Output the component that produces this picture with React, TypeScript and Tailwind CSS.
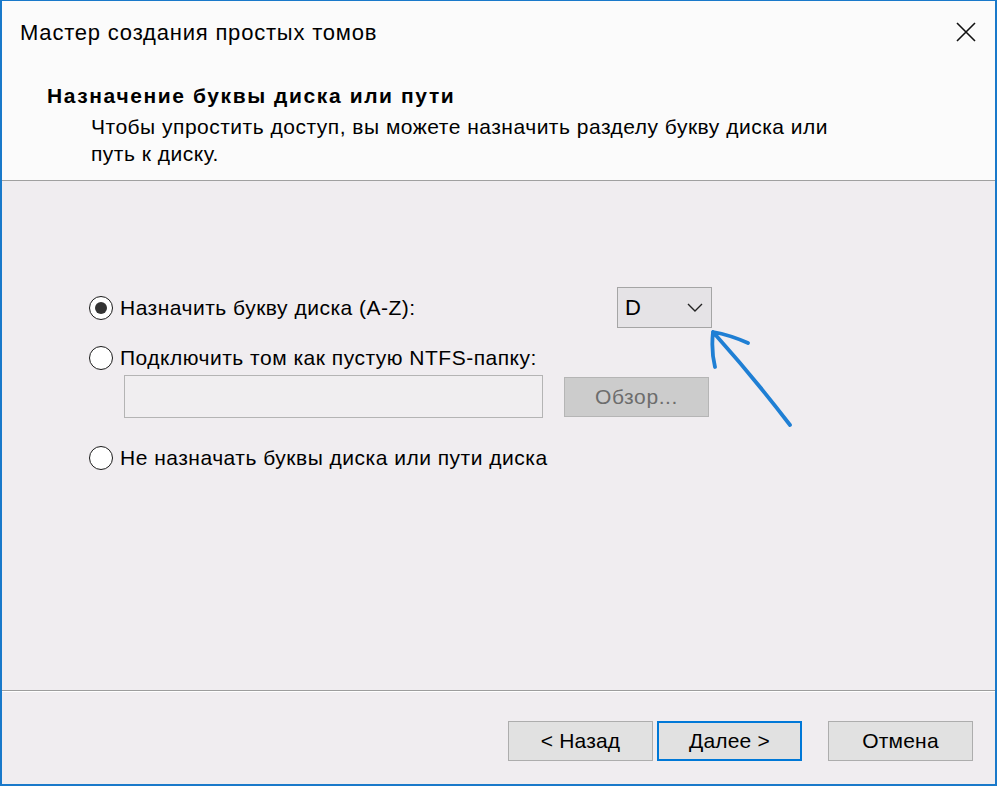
import React from "react";

const font = "font-['Liberation_Sans',Arial,sans-serif]";

function Radio({ checked }: { checked?: boolean }) {
  return (
    <span className="flex h-[24px] w-[24px] shrink-0 items-center justify-center rounded-full border-[1.5px] border-[#1a1a1a] bg-white">
      {checked ? <span className="h-[12px] w-[12px] rounded-full bg-[#333333]" /> : null}
    </span>
  );
}

function Option({ checked, label }: { checked?: boolean; label: string }) {
  return (
    <div className="flex h-[28px] items-center">
      <Radio checked={checked} />
      <span className="ml-[7px] text-[21px] leading-[28px] tracking-[0.5px] text-black">{label}</span>
    </div>
  );
}

function WizardButton({ label, primary }: { label: string; primary?: boolean }) {
  return (
    <button
      className={
        primary
          ? "flex h-[40px] w-[145px] items-center justify-center border-2 border-[#0078d7] bg-[#e1e1e1] text-[21px] tracking-[0.2px] text-black"
          : "flex h-[40px] w-[145px] items-center justify-center border border-[#adadad] bg-[#e1e1e1] text-[21px] tracking-[0.2px] text-black"
      }
    >
      {label}
    </button>
  );
}

export default function App() {
  return (
    <div className={`h-[786px] w-[998px] bg-white ${font}`}>
      <div className="relative flex h-[786px] w-[997px] flex-col border-b-2 border-l-2 border-r-2 border-t border-[#1979ca]">
        {/* header */}
        <div className="h-[180px] shrink-0 border-b border-[#a0a0a0] bg-[#fbfbfb]">
          <div className="mt-[18px] flex h-[28px] items-center justify-between pl-[18px] pr-[19px]">
            <span className="text-[22px] leading-[28px] tracking-[0.8px] text-black">Мастер создания простых томов</span>
            <svg width="20" height="20" viewBox="0 0 20 20" className="mt-[-3px]">
              <path d="M1 1 L19 19 M19 1 L1 19" stroke="#111" strokeWidth="1.6" fill="none" />
            </svg>
          </div>
          <div className="mt-[35px] pl-[45px] text-[21px] font-bold leading-[28px] tracking-[1.6px] text-black">
            Назначение буквы диска или пути
          </div>
          <div className="mt-[3px] pl-[89px] text-[21px] leading-[27px] tracking-[0.5px] text-black">
            Чтобы упростить доступ, вы можете назначить разделу букву диска или
            <br />
            путь к диску.
          </div>
        </div>

        {/* body */}
        <div className="flex flex-1 flex-col bg-[#f0edf0] pl-[87px]">
          <div className="mt-[106px] flex h-[41px] items-center">
            <div className="w-[528px]">
              <Option checked label="Назначить букву диска (A-Z):" />
            </div>
            <div className="flex h-[41px] w-[95px] items-center justify-between border border-[#a5a5a5] bg-[#e5e3e6] pl-[7px] pr-[8px]">
              <span className="text-[22px] text-black">D</span>
              <svg width="16" height="9" viewBox="0 0 16 9">
                <path d="M1 1 L8 8 L15 1" stroke="#222" strokeWidth="1.4" fill="none" />
              </svg>
            </div>
          </div>
          <div className="mt-[16px]">
            <Option label="Подключить том как пустую NTFS-папку:" />
          </div>
          <div className="mt-[3px] flex items-center pl-[35px]">
            <div className="h-[43px] w-[419px] border border-[#b4b4b4] bg-[#f0eef0]" />
            <div className="ml-[21px] flex h-[40px] w-[145px] items-center justify-center border border-[#b5b5b5] bg-[#cccccc] text-[21px] tracking-[0.6px] text-[#6d6d6d]">
              Обзор...
            </div>
          </div>
          <div className="mt-[26px]">
            <Option label="Не назначать буквы диска или пути диска" />
          </div>
        </div>

        {/* footer */}
        <div className="h-[94px] shrink-0 bg-[#f0edf0]">
          <div className="h-px bg-[#9d9d9d]" />
          <div className="h-px bg-white" />
          <div className="mt-[29px] flex justify-end pr-[22px]">
            <WizardButton label="< Назад" />
            <div className="ml-[4px]">
              <WizardButton label="Далее >" primary />
            </div>
            <div className="ml-[26px]">
              <WizardButton label="Отмена" />
            </div>
          </div>
        </div>

        {/* annotation arrow */}
        <svg
          width="110"
          height="120"
          viewBox="0 0 110 120"
          className="pointer-events-none absolute left-[698px] top-[320px]"
        >
          <path
            d="M90 104 Q55 58 13 11 M13 11 Q30 14 48 22 M13 11 Q11 30 15 46"
            stroke="#1f7fd4"
            strokeWidth="3.8"
            strokeLinecap="round"
            strokeLinejoin="round"
            fill="none"
          />
        </svg>
      </div>
    </div>
  );
}
